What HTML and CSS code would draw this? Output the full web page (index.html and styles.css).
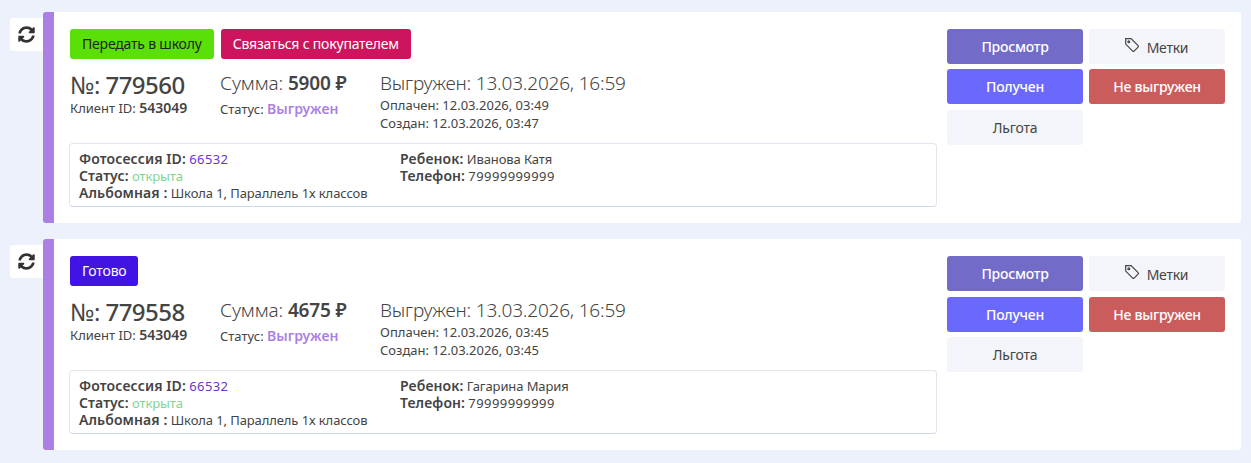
FILE: index.html
```html
<!DOCTYPE html>
<html lang="ru">
<head>
<meta charset="utf-8">
<title>Заказы</title>
<link rel="stylesheet" href="styles.css">
</head>
<body>
<div class="list">
  <div class="row">
    <button class="refresh" aria-label="Обновить"><svg viewBox="0 0 512 512" class="refresh-icon"><path d="M370.7 133.3C339.5 104 298.9 88 255.800 88c-77.500.1-144.300 53.200-162.800 126.900-1.300 5.400-6.100 9.200-11.700 9.200H24.100c-7.500 0-13.200-6.800-11.800-14.200C33.900 94.900 134.800 8 256 8c66.400 0 126.800 26.100 171.300 68.700L463 41c15.100-15.100 41-4.400 41 17V192c0 13.300-10.700 24-24 24H345.900c-21.400 0-32.100-25.900-17-41l41.800-41.700zM32 296h134.100c21.400 0 32.100 25.900 17 41l-41.800 41.800c31.300 29.300 71.800 45.300 114.900 45.200 77.400-.1 144.300-53.100 162.800-126.800 1.300-5.400 6.100-9.200 11.700-9.200h57.300c7.500 0 13.200 6.800 11.800 14.200C478.100 417.100 377.200 504 256 504c-66.400 0-126.800-26.100-171.300-68.700L49 471c-15.100 15.100-41 4.400-41-17V320c0-13.300 10.700-24 24-24z"/></svg></button>
    <article class="card">
      <div class="main">
        <div class="tags">
          <span class="tag tag-green">Передать в школу</span>
          <span class="tag tag-pink">Связаться с покупателем</span>
        </div>
        <div class="info">
          <div class="col-num">
            <div class="num">№: <b>779560</b></div>
            <div class="small">Клиент ID: <b class="strong">543049</b></div>
          </div>
          <div class="col-sum">
            <div class="sum">Сумма: <b>5900 ₽</b></div>
            <div class="small status-line">Статус: <b class="violet">Выгружен</b></div>
          </div>
          <div class="col-date">
            <div class="date">Выгружен: 13.03.2026, 16:59</div>
            <div class="small">Оплачен: 12.03.2026, 03:49</div>
            <div class="small">Создан: 12.03.2026, 03:47</div>
          </div>
        </div>
        <div class="box">
          <div class="box-left">
            <div class="line"><b>Фотосессия ID:</b> <span class="link digits">66532</span></div>
            <div class="line"><b>Статус:</b> <span class="open">открыта</span></div>
            <div class="line"><b>Альбомная :</b> Школа 1, Параллель 1х классов</div>
          </div>
          <div>
            <div class="line"><b>Ребенок:</b> Иванова Катя</div>
            <div class="line"><b>Телефон:</b> <span class="digits">79999999999</span></div>
          </div>
        </div>
      </div>
      <div class="actions">
        <button class="btn btn-view">Просмотр</button>
        <button class="btn btn-light"><svg viewBox="0 0 16 16" class="tag-icon"><path d="M1.700 1.700h5.400l7 7a1 1 0 0 1 0 1.400l-4 4a1 1 0 0 1-1.400 0l-7-7z"/><circle cx="4.800" cy="4.800" r=".9"/></svg>Метки</button>
        <button class="btn btn-got">Получен</button>
        <button class="btn btn-red">Не выгружен</button>
        <button class="btn btn-light">Льгота</button>
      </div>
    </article>
  </div>
  <div class="row">
    <button class="refresh" aria-label="Обновить"><svg viewBox="0 0 512 512" class="refresh-icon"><path d="M370.7 133.3C339.5 104 298.9 88 255.800 88c-77.500.1-144.300 53.200-162.800 126.900-1.300 5.400-6.100 9.200-11.700 9.200H24.100c-7.500 0-13.200-6.800-11.800-14.200C33.900 94.900 134.800 8 256 8c66.400 0 126.800 26.100 171.300 68.700L463 41c15.100-15.100 41-4.400 41 17V192c0 13.300-10.700 24-24 24H345.900c-21.400 0-32.100-25.900-17-41l41.800-41.700zM32 296h134.100c21.400 0 32.100 25.900 17 41l-41.800 41.800c31.300 29.300 71.800 45.300 114.900 45.200 77.400-.1 144.300-53.100 162.800-126.800 1.300-5.400 6.100-9.200 11.700-9.200h57.300c7.500 0 13.200 6.800 11.800 14.200C478.100 417.100 377.200 504 256 504c-66.400 0-126.800-26.100-171.300-68.700L49 471c-15.100 15.100-41 4.400-41-17V320c0-13.300 10.700-24 24-24z"/></svg></button>
    <article class="card">
      <div class="main">
        <div class="tags">
          <span class="tag tag-blue">Готово</span>
        </div>
        <div class="info">
          <div class="col-num">
            <div class="num">№: <b>779558</b></div>
            <div class="small">Клиент ID: <b class="strong">543049</b></div>
          </div>
          <div class="col-sum">
            <div class="sum">Сумма: <b>4675 ₽</b></div>
            <div class="small status-line">Статус: <b class="violet">Выгружен</b></div>
          </div>
          <div class="col-date">
            <div class="date">Выгружен: 13.03.2026, 16:59</div>
            <div class="small">Оплачен: 12.03.2026, 03:45</div>
            <div class="small">Создан: 12.03.2026, 03:45</div>
          </div>
        </div>
        <div class="box">
          <div class="box-left">
            <div class="line"><b>Фотосессия ID:</b> <span class="link digits">66532</span></div>
            <div class="line"><b>Статус:</b> <span class="open">открыта</span></div>
            <div class="line"><b>Альбомная :</b> Школа 1, Параллель 1х классов</div>
          </div>
          <div>
            <div class="line"><b>Ребенок:</b> Гагарина Мария</div>
            <div class="line"><b>Телефон:</b> <span class="digits">79999999999</span></div>
          </div>
        </div>
      </div>
      <div class="actions">
        <button class="btn btn-view">Просмотр</button>
        <button class="btn btn-light"><svg viewBox="0 0 16 16" class="tag-icon"><path d="M1.700 1.700h5.400l7 7a1 1 0 0 1 0 1.400l-4 4a1 1 0 0 1-1.400 0l-7-7z"/><circle cx="4.800" cy="4.800" r=".9"/></svg>Метки</button>
        <button class="btn btn-got">Получен</button>
        <button class="btn btn-red">Не выгружен</button>
        <button class="btn btn-light">Льгота</button>
      </div>
    </article>
  </div>
</div>
</body>
</html>
```
FILE: styles.css
```css
* { box-sizing: border-box; }
html, body { margin: 0; height: 100%; }
body {
  background: #edf1fb;
  font-family: "Noto Sans", sans-serif;
  color: #444;
  overflow: hidden;
}
b { font-weight: 600; }
.list {
  display: flex;
  flex-direction: column;
  gap: 16.300px;
  padding: 12.100px 10px 0 10px;
}
.row { display: flex; align-items: flex-start; }
.refresh {
  width: 33px;
  height: 33px;
  margin-top: 6px;
  padding: 0 0 1px;
  border: 0;
  background: #fff;
  border-radius: 3px 0 0 3px;
  display: flex;
  align-items: center;
  justify-content: center;
}
.refresh-icon { width: 17px; height: 17px; fill: #333; }
.card {
  flex: 1;
  height: 211px;
  background: #fff;
  border-left: 11px solid #ab7fe3;
  border-radius: 3px;
  display: flex;
  padding: 17.100px 16px 0 16px;
}
.main { width: 867px; }
.tags { display: flex; gap: 7px; height: 30px; }
.tag {
  font-size: 14px;
  line-height: 30px;
  height: 30px;
  padding: 0 12px;
  border-radius: 3px;
  letter-spacing: -0.2px;
}
.tag-green { background: #5ae008; color: #222; }
.tag-pink { background: #cc155c; color: #fff; }
.tag-blue { background: #4214e4; color: #fff; }
.info { display: flex; margin-top: 10px; height: 64px; }
.col-num { width: 150px; }
.col-sum { width: 160px; }
.num {
  font-size: 24px;
  line-height: 28px;
  margin-top: 2px;
  white-space: nowrap;
  letter-spacing: -0.55px;
}
.num b { font-weight: 500; }
.sum, .date {
  font-size: 19px;
  font-weight: 300;
  line-height: 26px;
  margin-top: 1px;
  white-space: nowrap;
}
.sum { letter-spacing: -0.15px; }
.date { letter-spacing: -0.2px; }
.sum b { font-weight: 600; }
.small { font-size: 13px; line-height: 18px; white-space: nowrap; }
.strong { font-size: 14px; }
.status-line { margin-top: 4px; }
.status-line .violet { font-size: 14px; }
.violet { color: #ab7fe3; }
.box {
  margin: 10px 0 0 -1px;
  height: 64px;
  border: 1px solid #e2e6ee;
  border-bottom-color: #cfd8e6;
  border-radius: 4px;
  padding: 6px 9px;
  display: flex;
  font-size: 13px;
}
.line { height: 17px; line-height: 17px; white-space: nowrap; letter-spacing: -0.1px; }
.line b { font-size: 14px; letter-spacing: 0.1px; }
.box-left { width: 321px; }
.digits { letter-spacing: 0.42px; }
.link { color: #6a35c9; }
.open { color: #7fd494; }
.actions {
  width: 278px;
  margin-left: 10px;
  display: grid;
  grid-template-columns: 136px 136px;
  grid-auto-rows: 35px;
  column-gap: 6px;
  row-gap: 5.200px;
  align-content: start;
}
.btn {
  border: 0;
  border-radius: 3px;
  font-family: inherit;
  font-size: 14px;
  padding: 0;
  display: flex;
  align-items: center;
  justify-content: center;
  letter-spacing: -0.25px;
}
.btn-view { background: #726cc8; color: #fff; font-weight: 500; }
.btn-got { background: #6b68fe; color: #fff; font-weight: 500; }
.btn-red { background: #cb5c5c; color: #fff; font-weight: 500; }
.btn-light { background: #f4f5fa; color: #444; padding-top: 1px; }
.tag-icon {
  width: 16px;
  height: 16px;
  margin: -4px 7px 0 -2px;
  fill: none;
  stroke: #444;
  stroke-width: 1.200;
}
```
